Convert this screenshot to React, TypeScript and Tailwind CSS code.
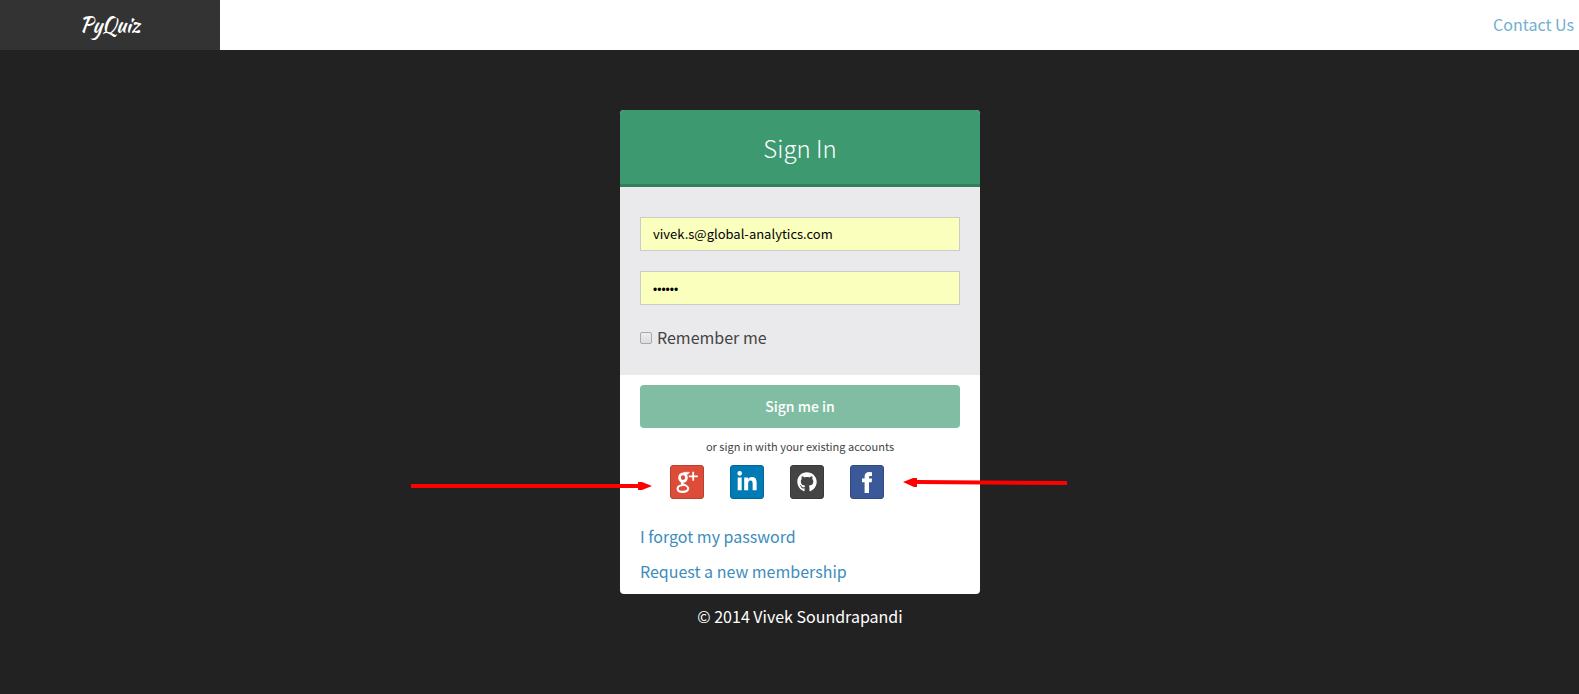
import type { ReactNode } from "react";
import { FaGithub, FaLinkedinIn } from "react-icons/fa";

function GooglePlusMark() {
  return (
    <svg viewBox="0 0 22 22" className="size-[22px]" fill="none" stroke="currentColor" aria-hidden="true">
      <ellipse cx="7" cy="6.6" rx="3.5" ry="3.8" strokeWidth="2.7" />
      <path d="M7.5 1.2H13.6L12 3.2H9Z" fill="currentColor" strokeWidth="0.4" />
      <path d="M6.6 10.4C5 11.8 6 12.8 8 13.6C11.2 15 12.4 15.9 12.2 17.7C11.9 20 9.5 20.9 6.8 20.9C3.8 20.9 1.6 19.9 1.6 17.7C1.6 15.3 4.4 14.2 7.6 14" strokeWidth="2.1" />
      <path d="M17.2 0.8V9.8M12.8 5.3H21.8" strokeWidth="1.8" />
    </svg>
  );
}

function FacebookMark() {
  return (
    <svg viewBox="0 0 10 21" className="h-[21px] w-[10px]" fill="currentColor" aria-hidden="true">
      <path d="M10 0.2V4H8.4C7.3 4 7 4.5 7 5.5V6.6H10L9.7 10.2H7V21H2.6V10.2H0V6.6H2.6V4.8C2.6 1.6 4.3 0.1 7.2 0.1Z" />
    </svg>
  );
}

type Provider = { name: string; style: string; icon: ReactNode };

const providers: Provider[] = [
  { name: "Google Plus", style: "bg-[#dd4b39] border-[#b93f30]", icon: <GooglePlusMark /> },
  { name: "LinkedIn", style: "bg-[#007bb6] border-[#006798]", icon: <FaLinkedinIn className="size-[22px]" /> },
  { name: "GitHub", style: "bg-[#444444] border-[#393939]", icon: <FaGithub className="size-5" /> },
  { name: "Facebook", style: "bg-[#3b5998] border-[#314a7f]", icon: <FacebookMark /> },
];

const fieldClass =
  "block h-[34px] w-full border border-[#cccccc] bg-[#faffbd] px-3 text-black outline-none";

export default function App() {
  return (
    <div className="flex min-h-screen flex-col bg-[#222222] font-['Noto_Sans_CJK_SC','Source_Sans_Pro',sans-serif] text-[16px] leading-[25px] text-[#444444]">
      <header className="flex h-[50px] items-stretch bg-white">
        <a
          href="#"
          className="flex w-[220px] items-center justify-center bg-[#333333] pb-0.5 font-['Kaushan_Script',cursive] text-[20px] text-white"
        >
          PyQuiz
        </a>
        <nav className="ml-auto flex items-center pr-[5px] pb-0.5">
          <a href="#contact" className="text-[#72afd2]">
            Contact Us
          </a>
        </nav>
      </header>

      <main className="flex flex-col items-center pt-[60px] pl-[21px]">
        <div className="relative w-[360px]">
          <form className="overflow-hidden rounded bg-white" onSubmit={(e) => e.preventDefault()}>
            <h1 className="flex h-[77px] items-center justify-center border-b-[3px] border-[#327f5b] bg-[#3d9970] text-[24px] font-light text-white">
              Sign In
            </h1>

            <div className="flex flex-col gap-5 bg-[#eaeaec] px-5 pt-[30px] pb-[25px]">
              <input
                type="text"
                aria-label="User ID"
                defaultValue="vivek.s@global-analytics.com"
                className={`${fieldClass} pb-0.5 text-[13px]`}
              />
              <input
                type="password"
                aria-label="Password"
                defaultValue="secret"
                className={`${fieldClass} pt-1 font-['Liberation_Sans',sans-serif] text-[12px]`}
              />
              <label className="flex items-center gap-[5px]">
                <input
                  type="checkbox"
                  className="size-3 appearance-none rounded-[2px] border border-[#a8a8a8] bg-linear-to-b from-[#eeeeee] to-[#dcdcdc]"
                />
                Remember me
              </label>
            </div>

            <div className="px-5 pt-[10px] pb-[10px]">
              <button
                type="submit"
                className="h-[43px] w-full rounded bg-[#81bda3] text-[14px] font-medium text-white"
              >
                Sign me in
              </button>
              <p className="py-[9px] text-center text-[11px] leading-[19px]">
                or sign in with your existing accounts
              </p>
              <div className="flex gap-[26px] pl-[30px]">
                {providers.map((p) => (
                  <button
                    key={p.name}
                    type="button"
                    aria-label={`Sign in with ${p.name}`}
                    className={`flex size-[34px] items-center justify-center rounded-[3px] border text-white ${p.style}`}
                  >
                    {p.icon}
                  </button>
                ))}
              </div>
              <div className="flex flex-col items-start gap-[10px] pt-[25px]">
                <a href="#forgot" className="text-[#3c8dbc]">
                  I forgot my password
                </a>
                <a href="#register" className="text-[#3c8dbc]">
                  Request a new membership
                </a>
              </div>
            </div>
          </form>

          <svg
            viewBox="0 0 242 10"
            className="pointer-events-none absolute top-[371px] -left-[209px] h-[10px] w-[242px] fill-[#ff0000]"
            aria-hidden="true"
          >
            <path d="M0 3H227V1H231L241 5L231 9H227V7H0Z" />
          </svg>
          <svg
            viewBox="0 0 164 10"
            className="pointer-events-none absolute top-[367px] left-[283px] h-[10px] w-[164px] fill-[#ff0000]"
            aria-hidden="true"
          >
            <path d="M0 5L10 1H14V3L164 4V8L14 7V10H11Z" />
          </svg>
        </div>
        <p className="pt-[10px] text-center text-white">© 2014 Vivek Soundrapandi</p>
      </main>
    </div>
  );
}
